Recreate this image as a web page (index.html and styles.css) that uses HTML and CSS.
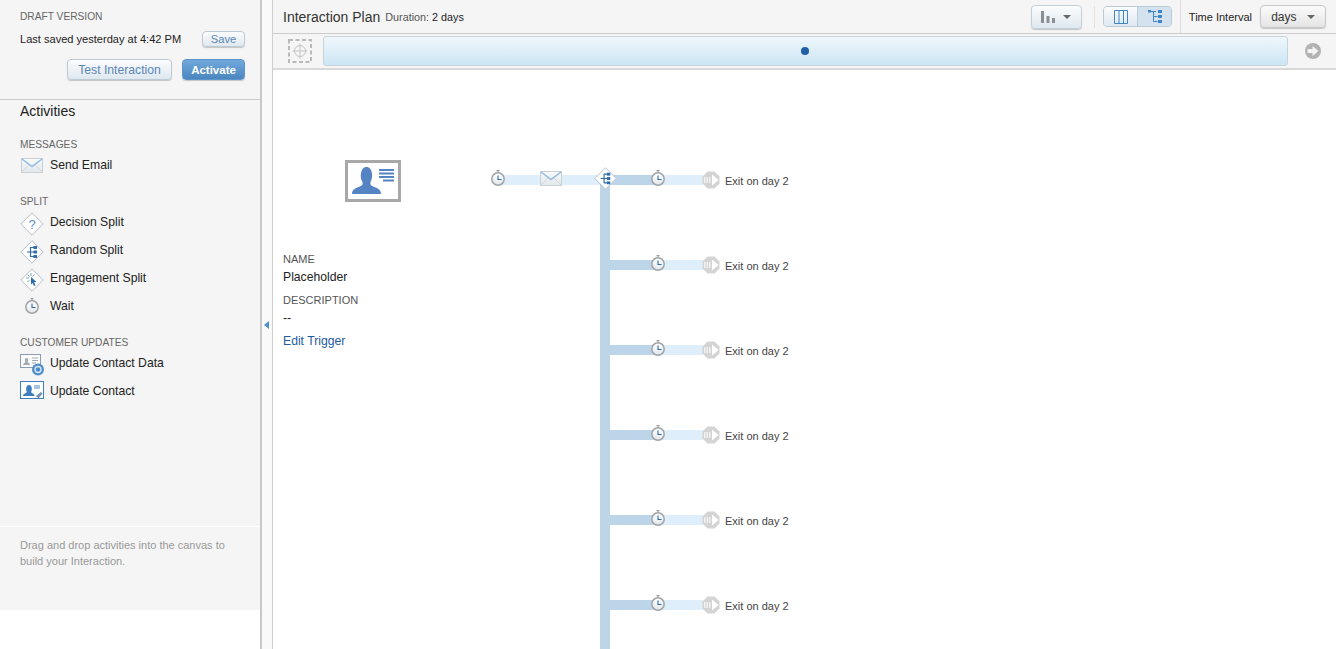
FILE: index.html
```html
<!DOCTYPE html>
<html lang="en">
<head>
    <meta charset="UTF-8">
    <title>Interaction Plan</title>
    <link rel="stylesheet" href="styles.css">
</head>
<body>
    <svg class="sprites" width="0" height="0">
        <defs>
            <linearGradient id="envFill" x1="0" y1="0" x2="0" y2="1">
                <stop offset="0" stop-color="#f8fafb"/>
                <stop offset="1" stop-color="#e2e7eb"/>
            </linearGradient>
            <linearGradient id="clockFill" x1="0" y1="0" x2="0" y2="1">
                <stop offset="0" stop-color="#ffffff"/>
                <stop offset="1" stop-color="#e3e7ea"/>
            </linearGradient>
            <symbol id="i-envelope" viewBox="0 0 22 15">
                <rect x="0.5" y="0.5" width="21" height="14" fill="url(#envFill)" stroke="#cbd0d5"/>
                <path d="M1 1l10 7.500 10-7.500" fill="none" stroke="#8fbce6" stroke-width="1.5"/>
                <path d="M1 14l7-7M21 14l-7-7" fill="none" stroke="#d2d7dc"/>
            </symbol>
            <symbol id="i-clock" viewBox="0 0 14 16">
                <rect x="5.5" y="0" width="3" height="1.2" fill="#9a9a9a"/>
                <rect x="6.5" y="1" width="1" height="2" fill="#9a9a9a"/>
                <circle cx="7" cy="9" r="6.2" fill="url(#clockFill)" stroke="#a0a4a8" stroke-width="1.5"/>
                <path d="M7 5.500V9.500h3.500" fill="none" stroke="#2f6cae" stroke-width="1.1"/>
            </symbol>
            <symbol id="i-diamond" viewBox="0 0 24 24">
                <path d="M12 .8L23.200 12 12 23.200.8 12z" fill="#fff" stroke="#b4bfc9"/>
            </symbol>
            <symbol id="i-tree" viewBox="0 0 24 24">
                <path d="M12 .8L23.200 12 12 23.200.8 12z" fill="#fff" stroke="#b4bfc9"/>
                <path d="M7 12h3.500M10.500 7.500h4M10.500 12h4M10.500 16.500h4M10.500 7v10" fill="none" stroke="#2f6cae" stroke-width="1.2"/>
                <rect x="13.500" y="6" width="3.500" height="3" fill="#2f6cae"/>
                <rect x="13.500" y="10.500" width="3.500" height="3" fill="#2f6cae"/>
                <rect x="13.500" y="15" width="3.500" height="3" fill="#2f6cae"/>
            </symbol>
            <symbol id="i-exit" viewBox="0 0 18 18">
                <path d="M5.500 .5h7l5 5v7l-5 5h-7l-5-5v-7z" fill="#d4d4d4"/>
                <path d="M2 6h1.500v6H2zM4.500 6H6v6H4.500zM7 6h1.500v6H7z" fill="#f1f1f1"/>
                <path d="M10 3.500v11L16.500 9z" fill="#fff"/>
            </symbol>
        </defs>
    </svg>

    <div class="app">
        <aside class="sidebar">
            <section class="draft">
                <h4 class="caption">DRAFT VERSION</h4>
                <div class="saved-row">
                    <span>Last saved yesterday at 4:42 PM</span>
                    <button class="btn btn-save">Save</button>
                </div>
                <div class="draft-actions">
                    <button class="btn btn-test">Test Interaction</button>
                    <button class="btn btn-activate">Activate</button>
                </div>
            </section>

            <section class="activities">
                <h2>Activities</h2>

                <h4 class="caption group-first">MESSAGES</h4>
                <div class="activity">
                    <svg class="act-icon env" width="22" height="15"><use href="#i-envelope"/></svg>
                    <span>Send Email</span>
                </div>

                <h4 class="caption group">SPLIT</h4>
                <div class="activity">
                    <svg class="act-icon" viewBox="0 0 24 24" width="24" height="24">
                        <use href="#i-diamond" width="24" height="24"/>
                        <text x="12" y="16.500" class="q-mark">?</text>
                    </svg>
                    <span>Decision Split</span>
                </div>
                <div class="activity">
                    <svg class="act-icon" width="24" height="24"><use href="#i-tree"/></svg>
                    <span>Random Split</span>
                </div>
                <div class="activity">
                    <svg class="act-icon" viewBox="0 0 24 24" width="24" height="24">
                        <use href="#i-diamond" width="24" height="24"/>
                        <path d="M11 5v3M6 10h3M7.500 6.500l2 2M14.500 6.500l-2 2M7.500 14l2-2" stroke="#7fa6cf" stroke-width="1" fill="none"/>
                        <path d="M11 9l5.500 5-2.500.3 1.500 3-1.500.7-1.400-3L11 16.500z" fill="#2f6cae"/>
                    </svg>
                    <span>Engagement Split</span>
                </div>
                <div class="activity">
                    <svg class="act-icon clock" width="14" height="16"><use href="#i-clock"/></svg>
                    <span>Wait</span>
                </div>

                <h4 class="caption group">CUSTOMER UPDATES</h4>
                <div class="activity">
                    <svg class="act-icon contact-data" viewBox="0 0 24 22" width="24" height="22">
                        <rect x="0.500" y="0.500" width="20" height="13" fill="#fbfbfb" stroke="#8c9cb2"/>
                        <path d="M3 11c0-2 2-2 2.500-3-1-1.500-.8-4 1-4s2 2.500 1 4c.5 1 2.500 1 2.500 3z" fill="#a3abb5"/>
                        <path d="M12 4h6M12 6.500h6M12 9h4" stroke="#a3abb5"/>
                        <circle cx="18" cy="15.500" r="6" fill="#4f8ecb"/>
                        <circle cx="18" cy="15.500" r="3" fill="none" stroke="#d9e8f6" stroke-width="1.300"/>
                    </svg>
                    <span>Update Contact Data</span>
                </div>
                <div class="activity">
                    <svg class="act-icon" viewBox="0 0 24 18" width="24" height="18">
                        <rect x="0.500" y="0.500" width="23" height="17" fill="#fff" stroke="#3f7cc0"/>
                        <path d="M3 15c0-2.500 3-2.500 4-4-1.500-2-1.200-7 2-7s3.500 5 2 7c1 1.500 3.500 1.500 3.500 4z" fill="#3f7cc0"/>
                        <path d="M14 4h6v4h-6z" fill="#a9c3e2"/>
                        <path d="M16 15l5-4 1.500 1.500-4 5z" fill="#6f8fb3"/>
                    </svg>
                    <span>Update Contact</span>
                </div>
            </section>

            <section class="hint">Drag and drop activities into the canvas to build your Interaction.</section>
        </aside>

        <div class="splitter"><span class="collapse-arrow"></span></div>

        <main class="main">
            <header class="topbar">
                <h1>Interaction Plan</h1>
                <span class="duration"><em>Duration:</em> 2 days</span>
                <div class="topbar-tools">
                    <button class="btn tool-btn">
                        <svg width="15" height="12" viewBox="0 0 15 12"><path d="M0 0h3v12H0zM5.500 5h3v7h-3zM11 7h3v5h-3z" fill="#8b8f93"/></svg>
                        <span class="caret"></span>
                    </button>
                    <span class="tool-sep"></span>
                    <div class="view-toggle">
                        <button class="toggle-left">
                            <svg width="14" height="14" viewBox="0 0 14 14"><path d="M.500 .500h13v13H.500zM5 .500v13M9.500 .500v13" fill="none" stroke="#3f86c9"/></svg>
                        </button>
                        <button class="toggle-right">
                            <svg width="14" height="14" viewBox="0 0 14 14"><path d="M3 1.500h5M5.500 1.500v10M5.500 6.500h4M5.500 11.500h4" fill="none" stroke="#3f86c9"/><path d="M0 0h3v2.500H0zM10 0h4v3h-4zM10 5h4v3h-4zM10 10h4v3h-4z" fill="#3f86c9"/></svg>
                        </button>
                    </div>
                    <div class="interval">
                        <label>Time Interval</label>
                        <button class="btn days-btn">days <span class="caret"></span></button>
                    </div>
                </div>
            </header>

            <div class="timeline-bar">
                <svg class="target" width="24" height="24" viewBox="0 0 24 24">
                    <rect x="1" y="1" width="22" height="22" fill="none" stroke="#b9b9b9" stroke-width="2" stroke-dasharray="4 2.500"/>
                    <circle cx="12" cy="12" r="5.500" fill="none" stroke="#c4c4c4"/>
                    <path d="M12 4.500v15M4.500 12h15" stroke="#c4c4c4"/>
                </svg>
                <div class="timeline"><span class="timeline-dot"></span></div>
                <svg class="next" width="16" height="16" viewBox="0 0 16 16">
                    <circle cx="8" cy="8" r="8" fill="#b2b2b2"/>
                    <path d="M2.500 6h5V3l6 5-6 5v-3h-5z" fill="#f3f3f3"/>
                </svg>
            </div>

            <div class="canvas">
                <div class="trigger">
                    <div class="trigger-icon">
                        <svg width="50" height="36" viewBox="0 0 50 36">
                            <path d="M4 31c0-5 4-6 9-8 2-1 2-3 1-5-2-3-2-14 4.500-14s6.500 11 4.500 14c-1 2-1 4 1 5 5 2 9 3 9 8z" fill="#5484c4"/>
                            <path d="M31 6h15v2H31zM31 9.500h15v2H31zM31 13h15v2H31zM35 16.500h11v2H35z" fill="#5484c4"/>
                        </svg>
                    </div>
                    <h4 class="field-label first">NAME</h4>
                    <div class="field-value">Placeholder</div>
                    <h4 class="field-label">DESCRIPTION</h4>
                    <div class="field-value">--</div>
                    <a class="edit-link" href="#">Edit Trigger</a>
                </div>

                <div class="flow">
                    <div class="trunk"></div>
                    <div class="lead">
                        <svg class="node" width="14" height="16"><use href="#i-clock"/></svg>
                        <svg class="node lead-mail" width="22" height="15"><use href="#i-envelope"/></svg>
                        <svg class="node lead-split" width="23" height="23"><use href="#i-tree"/></svg>
                    </div>
                    <div class="branch">
                        <div class="band-dark"><svg class="node" width="14" height="16"><use href="#i-clock"/></svg></div>
                        <div class="band-light"></div>
                        <svg class="exit" width="18" height="18"><use href="#i-exit"/></svg>
                        <span class="exit-label">Exit on day 2</span>
                    </div>
                    <div class="branch">
                        <div class="band-dark"><svg class="node" width="14" height="16"><use href="#i-clock"/></svg></div>
                        <div class="band-light"></div>
                        <svg class="exit" width="18" height="18"><use href="#i-exit"/></svg>
                        <span class="exit-label">Exit on day 2</span>
                    </div>
                    <div class="branch">
                        <div class="band-dark"><svg class="node" width="14" height="16"><use href="#i-clock"/></svg></div>
                        <div class="band-light"></div>
                        <svg class="exit" width="18" height="18"><use href="#i-exit"/></svg>
                        <span class="exit-label">Exit on day 2</span>
                    </div>
                    <div class="branch">
                        <div class="band-dark"><svg class="node" width="14" height="16"><use href="#i-clock"/></svg></div>
                        <div class="band-light"></div>
                        <svg class="exit" width="18" height="18"><use href="#i-exit"/></svg>
                        <span class="exit-label">Exit on day 2</span>
                    </div>
                    <div class="branch">
                        <div class="band-dark"><svg class="node" width="14" height="16"><use href="#i-clock"/></svg></div>
                        <div class="band-light"></div>
                        <svg class="exit" width="18" height="18"><use href="#i-exit"/></svg>
                        <span class="exit-label">Exit on day 2</span>
                    </div>
                    <div class="branch">
                        <div class="band-dark"><svg class="node" width="14" height="16"><use href="#i-clock"/></svg></div>
                        <div class="band-light"></div>
                        <svg class="exit" width="18" height="18"><use href="#i-exit"/></svg>
                        <span class="exit-label">Exit on day 2</span>
                    </div>
                </div>
            </div>
        </main>
    </div>
</body>
</html>
```

FILE: styles.css
```css
html, body {
    margin: 0;
    padding: 0;
    height: 100%;
    overflow: hidden;
    background-color: #ffffff;
    font-family: "Liberation Sans", Arial, sans-serif;
    font-size: 12.2px;
    color: #222222;
}

.sprites {
    position: absolute;
}

.app {
    display: flex;
    height: 649px;
}

/* left column */
.sidebar {
    width: 260px;
    height: 610px;
    flex-shrink: 0;
    display: flex;
    flex-direction: column;
    background-color: #f5f5f5;
}

.caption {
    margin: 0;
    font-size: 10.2px;
    font-weight: normal;
    line-height: 12px;
    color: #666666;
}

.draft {
    height: 100px;
    box-sizing: border-box;
    padding: 11px 15px 0 20px;
    border-bottom: 1px solid #cccccc;
}

.saved-row {
    display: flex;
    justify-content: space-between;
    align-items: center;
    margin-top: 8px;
    font-size: 11.07px;
}

.draft-actions {
    display: flex;
    justify-content: flex-end;
    gap: 10px;
    margin-top: 12px;
}

.btn {
    font-family: inherit;
    border-radius: 4px;
    border: 1px solid #bccad6;
    background: linear-gradient(#fbfcfd, #dfe8f0);
    box-shadow: 0 1px 1px rgba(0, 0, 0, 0.2);
    color: #5a86b5;
    padding: 0;
}

.btn-save {
    width: 43px;
    height: 16px;
    font-size: 11.2px;
    line-height: 14px;
}

.btn-test {
    width: 105px;
    height: 21px;
    font-size: 12.2px;
}

.btn-activate {
    width: 63px;
    height: 21px;
    font-size: 11.5px;
    font-weight: bold;
    color: #ffffff;
    border-color: #5b95cc;
    background: linear-gradient(#72a9dc, #4a86bf);
}

.activities {
    flex: 1;
    padding: 3px 0 0 20px;
}

.activities h2 {
    margin: 0;
    font-size: 14px;
    font-weight: normal;
    line-height: 17px;
    color: #222222;
}

.group-first {
    margin-top: 19px;
}

.group {
    margin-top: 11px;
}

.activity {
    position: relative;
    box-sizing: border-box;
    height: 28px;
    padding: 1px 0 0 30px;
    line-height: 15px;
}

.caption + .activity {
    margin-top: 6px;
}

.act-icon {
    position: absolute;
    left: 0;
    top: -2px;
}

.act-icon.env {
    left: 1px;
    top: 1px;
}

.act-icon.clock {
    left: 5px;
    top: 0;
}

.act-icon.contact-data {
    top: -1px;
}

.q-mark {
    font-family: "Liberation Sans", Arial, sans-serif;
    font-size: 13px;
    fill: #5b8fc7;
    text-anchor: middle;
}

.hint {
    height: 84px;
    box-sizing: border-box;
    padding: 10px 30px 0 20px;
    border-top: 1px solid #ffffff;
    font-size: 11px;
    line-height: 16px;
    color: #999999;
}

.splitter {
    width: 10px;
    flex-shrink: 0;
    position: relative;
    background-color: #f9f9f9;
    border-left: 2px solid #c8c8c8;
    border-right: 1px solid #cfcfcf;
}

.collapse-arrow {
    position: absolute;
    left: 2px;
    top: 321px;
    border-top: 4px solid transparent;
    border-bottom: 4px solid transparent;
    border-right: 5px solid #4f8ecb;
}

/* right column */
.main {
    flex: 1;
    min-width: 0;
    display: flex;
    flex-direction: column;
}

.topbar {
    height: 34px;
    box-sizing: border-box;
    display: flex;
    align-items: center;
    padding-left: 10px;
    background-color: #f5f5f5;
    border-bottom: 1px solid #cccccc;
}

.topbar h1 {
    margin: 0;
    font-size: 14px;
    font-weight: normal;
    color: #333333;
}

.duration {
    margin-left: 5px;
    margin-top: 1px;
    font-size: 10.8px;
    color: #222222;
}

.duration em {
    font-style: normal;
    color: #555555;
}

.topbar-tools {
    margin-left: auto;
    display: flex;
    align-items: center;
    height: 100%;
}

.tool-btn {
    width: 51px;
    height: 24px;
    display: flex;
    align-items: center;
    justify-content: center;
    gap: 7px;
    border-color: #c4d0da;
}

.caret {
    display: inline-block;
    border-left: 4px solid transparent;
    border-right: 4px solid transparent;
    border-top: 4px solid #666666;
    vertical-align: middle;
}

.tool-sep {
    width: 1px;
    height: 22px;
    margin: 0 8px 0 12px;
    background-color: #e2e2e2;
}

.view-toggle {
    display: flex;
    height: 19px;
    border: 1px solid #b9cad8;
    border-radius: 4px;
    overflow: hidden;
}

.view-toggle button {
    width: 33.5px;
    padding: 0;
    border: 0;
    display: flex;
    align-items: center;
    justify-content: center;
}

.toggle-left {
    background: linear-gradient(#fbfcfd, #dfe8f0);
}

.view-toggle .toggle-right {
    background-color: #d3e2ee;
    border-left: 1px solid #b9cad8;
}

.interval {
    display: flex;
    align-items: center;
    height: 100%;
    margin-left: 8px;
    padding: 0 10px 0 8px;
    border-left: 1px solid #dddddd;
    font-size: 11px;
}

.days-btn {
    width: 66px;
    height: 23px;
    margin-left: 8px;
    font-size: 12px;
    color: #333333;
    border-color: #c8c8c8;
    background: linear-gradient(#fbfbfb, #e4e4e4);
}

.days-btn .caret {
    margin-left: 7px;
}

.timeline-bar {
    height: 36px;
    box-sizing: border-box;
    display: flex;
    align-items: center;
    padding: 0 15px;
    background-color: #f5f5f5;
    border-bottom: 2px solid #d9d9d9;
}

.timeline {
    flex: 1;
    height: 30px;
    margin: 0 17px 0 11px;
    box-sizing: border-box;
    display: flex;
    align-items: center;
    justify-content: center;
    border: 1px solid #c8d3da;
    border-radius: 3px;
    background: linear-gradient(#eef7fc, #cde5f4);
}

.timeline-dot {
    width: 8px;
    height: 8px;
    border-radius: 50%;
    background-color: #1e5fa5;
    margin-left: -2px;
}

/* canvas */
.canvas {
    flex: 1;
    position: relative;
    display: flex;
    overflow: hidden;
    background-color: #ffffff;
}

.trigger {
    width: 200px;
    flex-shrink: 0;
    box-sizing: border-box;
    padding: 90px 0 0 10px;
}

.trigger-icon {
    width: 56px;
    height: 42px;
    box-sizing: border-box;
    margin-left: 62px;
    border: 3px solid #a8a8a8;
    background-color: #ffffff;
}

.trigger-icon svg {
    display: block;
}

.field-label {
    margin: 8px 0 0;
    font-size: 11px;
    font-weight: normal;
    line-height: 14px;
    color: #555555;
}

.field-label.first {
    margin-top: 50px;
}

.field-value {
    margin-top: 4px;
    line-height: 15px;
    color: #222222;
}

.edit-link {
    display: block;
    margin-top: 8px;
    line-height: 15px;
    color: #1d5c9e;
    text-decoration: none;
}

.flow {
    position: relative;
    flex: 1;
    padding-top: 67px;
}

.trunk {
    position: absolute;
    left: 127px;
    top: 110px;
    bottom: 0;
    width: 10px;
    background-color: #bdd5e9;
}

.lead {
    position: absolute;
    left: 25px;
    top: 105px;
    width: 102px;
    height: 10px;
    background-color: #dfeefb;
}

.node {
    display: block;
}

.lead .node {
    position: absolute;
    top: -5px;
    left: -7px;
}

.lead .lead-mail {
    left: 42px;
    top: -4px;
}

.lead .lead-split {
    left: 96px;
    top: -8px;
    z-index: 1;
}

.branch {
    display: flex;
    align-items: center;
    height: 85px;
    margin-left: 137px;
}

.band-dark {
    position: relative;
    width: 48px;
    height: 10px;
    background-color: #bdd5e9;
}

.band-dark .node {
    position: absolute;
    right: -7px;
    top: -5px;
}

.band-light {
    width: 45px;
    height: 10px;
    background-color: #dfeefb;
}

.exit {
    margin-left: -1px;
}

.exit-label {
    margin-left: 5px;
    margin-top: 2px;
    font-size: 11px;
    color: #444444;
}
```
